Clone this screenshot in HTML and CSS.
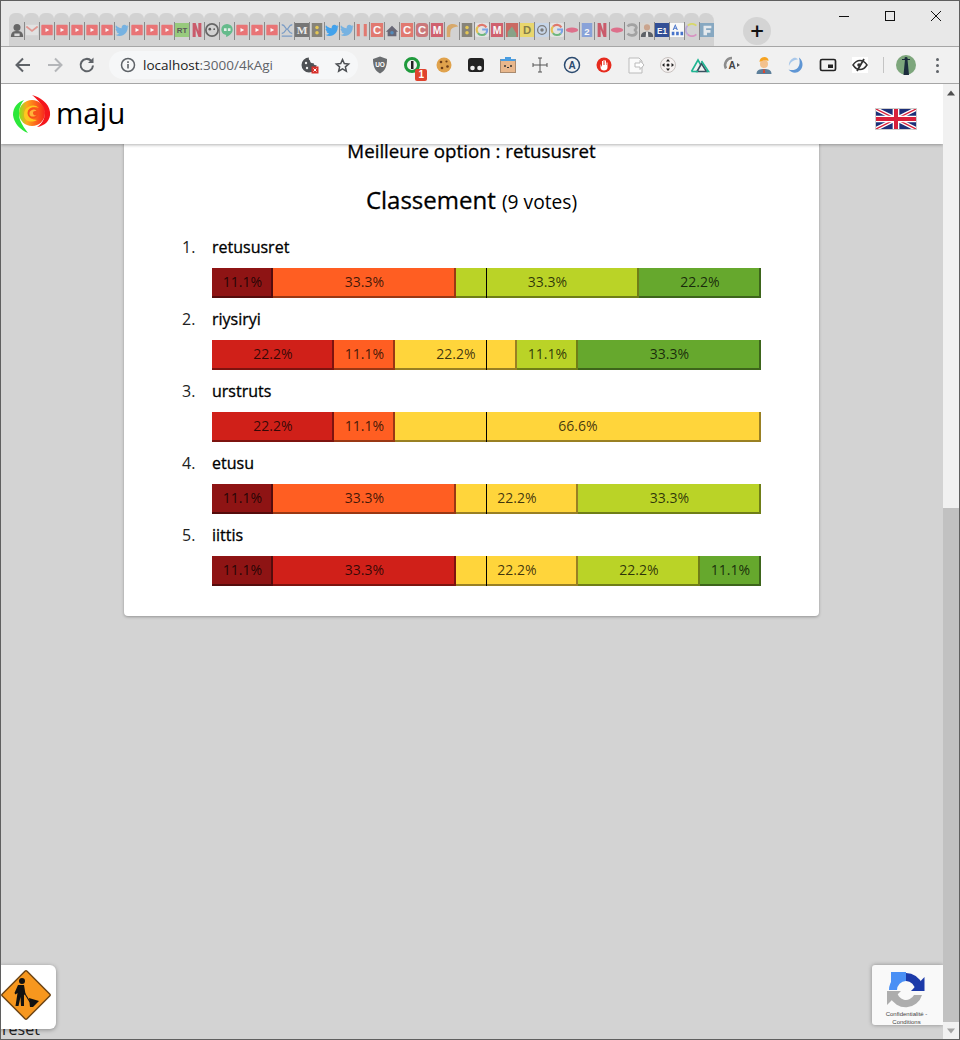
FILE: index.html
```html
<!DOCTYPE html>
<html lang="fr">
<head>
  <meta charset="UTF-8">
  <title>maju</title>
  <link rel="stylesheet" href="styles.css">
</head>
<body>
  <!-- favicons used by the tab strip -->
  <svg class="defs" width="0" height="0">
    <symbol id="yt" viewBox="0 0 16 16"><rect x="1.500" y="2" width="13" height="12" rx="1" fill="#ee6466"/><path d="M6.300 5.800v4.400L10.500 8z" fill="#fff"/></symbol>
    <symbol id="bird" viewBox="0 0 16 16"><path d="M15.500 3.400c-.6.3-1.200.4-1.800.5.600-.4 1.100-1 1.400-1.700-.6.4-1.300.6-2 .8C12.500 2.400 11.700 2 10.800 2 9 2 7.600 3.500 7.600 5.200c0 .3 0 .5.100.7C5 5.800 2.700 4.500 1.100 2.600.8 3.100.7 3.600.7 4.200c0 1.100.6 2.100 1.400 2.700-.5 0-1-.2-1.500-.4 0 1.600 1.100 2.900 2.600 3.200-.5.100-1 .2-1.500.1.400 1.300 1.600 2.200 3 2.200C3.600 13 2 13.600.4 13.400 1.800 14.300 3.500 14.800 5.200 14.800c6 0 9.300-5 9.300-9.300v-.4c.400-.5.700-1 1-1.700z"/></symbol>
    <symbol id="traffic" viewBox="0 0 16 16"><rect x="2" y="0" width="12" height="16" fill="#79766a"/><circle cx="8" cy="5" r="2" fill="#e8c640"/><circle cx="8" cy="11" r="2" fill="#e8c640"/></symbol>
    <symbol id="gee" viewBox="0 0 16 16"><rect x="0" y="0" width="16" height="16" rx="2" fill="#e6e6e6"/><path d="M13 5a6 6 0 0 0-9.500-1" fill="none" stroke="#e2685a" stroke-width="2.400"/><path d="M3.500 4a6 6 0 0 0-.2 7.500" fill="none" stroke="#e8c040" stroke-width="2.400"/><path d="M3.300 11.500a6 6 0 0 0 9 .5" fill="none" stroke="#5db36f" stroke-width="2.400"/><path d="M12.300 12a5 5 0 0 0 1.500-4.500H8.200" fill="none" stroke="#6d9be8" stroke-width="2.400"/></symbol>
    <symbol id="netflix" viewBox="0 0 16 16"><path d="M3 0h3.500l3 9V0H13v16h-3.300L6.500 7v9H3z" fill="#c9475a"/></symbol>
    <symbol id="oval" viewBox="0 0 16 16"><ellipse cx="8" cy="8" rx="7" ry="3" fill="#e0607f"/></symbol>
  </svg>

  <div class="window">
    <div class="tabstrip">
      <div class="tabs">
        <span class="tab"><svg viewBox="0 0 16 16"><circle cx="8" cy="5" r="4" fill="#555"/><path d="M1 16c0-6 3-7 7-7s7 1 7 7z" fill="#555"/><path d="M5 12h6v3H5z" fill="#ddd"/></svg></span>
        <span class="tab"><svg viewBox="0 0 16 16"><rect x="1" y="2" width="14" height="12" fill="#e4e4e4"/><path d="M1.500 4l6.500 5 6.500-5" fill="none" stroke="#e48f88" stroke-width="2"/></svg></span>
        <span class="tab"><svg><use href="#yt"/></svg></span>
        <span class="tab"><svg><use href="#yt"/></svg></span>
        <span class="tab"><svg><use href="#yt"/></svg></span>
        <span class="tab"><svg><use href="#yt"/></svg></span>
        <span class="tab"><svg><use href="#yt"/></svg></span>
        <span class="tab"><svg class="sky"><use href="#bird"/></svg></span>
        <span class="tab"><svg><use href="#yt"/></svg></span>
        <span class="tab"><svg><use href="#yt"/></svg></span>
        <span class="tab"><svg><use href="#yt"/></svg></span>
        <span class="tab"><svg viewBox="0 0 16 16"><rect width="16" height="16" fill="#8fc96f"/><text x="8" y="11.500" class="fav-text" fill="#444" font-size="9">RT</text></svg></span>
        <span class="tab"><svg><use href="#netflix"/></svg></span>
        <span class="tab"><svg viewBox="0 0 16 16"><circle cx="8" cy="8" r="7" fill="none" stroke="#555" stroke-width="2"/><circle cx="5.500" cy="7" r="1.500" fill="#444"/><circle cx="10.500" cy="7" r="1" fill="#444"/></svg></span>
        <span class="tab"><svg viewBox="0 0 16 16"><path d="M8 1a6.500 6.500 0 0 0-6.500 6.500C1.500 11 4 13.500 7 13.500V16c4-1.500 7.500-4.500 7.500-8.500A6.500 6.500 0 0 0 8 1z" fill="#52b77f"/><path d="M4.500 6h3v3h-3zM9 6h3v3H9z" fill="#e6f5ec"/></svg></span>
        <span class="tab"><svg><use href="#yt"/></svg></span>
        <span class="tab"><svg><use href="#yt"/></svg></span>
        <span class="tab"><svg><use href="#yt"/></svg></span>
        <span class="tab"><svg viewBox="0 0 16 16"><path d="M2 2c4 0 4 5 6 5s2-5 6-5M2 12c4 0 4-5 6-5s2 5 6 5M2 15h12" fill="none" stroke="#6d94c4" stroke-width="1.500"/></svg></span>
        <span class="tab"><svg viewBox="0 0 16 16"><rect width="16" height="16" fill="#666"/><text x="8" y="13" class="fav-text serif" fill="#eee" font-size="13">M</text></svg></span>
        <span class="tab"><svg><use href="#traffic"/></svg></span>
        <span class="tab"><svg class="blue"><use href="#bird"/></svg></span>
        <span class="tab"><svg class="sky"><use href="#bird"/></svg></span>
        <span class="tab"><svg viewBox="0 0 16 16"><path d="M2 1h3.500v14H2zM10 1h3.500v14H10z" fill="#e46a60"/></svg></span>
        <span class="tab"><svg viewBox="0 0 16 16"><rect x="1" width="14" height="16" fill="#e46a60"/><text x="8" y="12.500" class="fav-text" fill="#fff" font-size="13">C</text></svg></span>
        <span class="tab"><svg viewBox="0 0 16 16"><path d="M8 3l7 7h-2v5H3v-5H1z" fill="#556"/><circle cx="8" cy="11" r="2" fill="#3d7fb8"/></svg></span>
        <span class="tab"><svg viewBox="0 0 16 16"><rect x="1" width="14" height="16" fill="#e46a60"/><text x="8" y="12.500" class="fav-text" fill="#fff" font-size="13">C</text></svg></span>
        <span class="tab"><svg viewBox="0 0 16 16"><rect x="1" y="0" width="14" height="16" rx="4" fill="#c9696c"/><text x="8" y="12.500" class="fav-text" fill="#fff" font-size="13">C</text></svg></span>
        <span class="tab"><svg viewBox="0 0 16 16"><rect x="1" width="14" height="16" fill="#cf4d5d"/><text x="8" y="12.500" class="fav-text" fill="#fff" font-size="12">M</text></svg></span>
        <span class="tab"><svg viewBox="0 0 16 16"><path d="M2 16V7c0-4 3-6 7-6 3 0 5 1 6 3-3 0-6 1-8 3-1 2-1 5-1 9z" fill="#d9a25a"/></svg></span>
        <span class="tab"><svg><use href="#traffic"/></svg></span>
        <span class="tab"><svg><use href="#gee"/></svg></span>
        <span class="tab"><svg viewBox="0 0 16 16"><rect x="1" width="14" height="16" fill="#cf4d5d"/><text x="8" y="12.500" class="fav-text" fill="#fff" font-size="12">M</text></svg></span>
        <span class="tab"><svg viewBox="0 0 16 16"><rect x="1" width="14" height="16" fill="#c9574f"/><path d="M3 10l5-6 5 8v4H3z" fill="#7b9a7a"/></svg></span>
        <span class="tab"><svg viewBox="0 0 16 16"><rect width="16" height="16" fill="#ecd75c"/><text x="8" y="13" class="fav-text" fill="#776f33" font-size="13">D</text></svg></span>
        <span class="tab"><svg viewBox="0 0 16 16"><rect width="16" height="16" rx="2" fill="#c5d6ec"/><circle cx="8" cy="8" r="5" fill="none" stroke="#6d6d6d" stroke-width="1.500"/><circle cx="8" cy="8" r="2" fill="#6d6d6d"/></svg></span>
        <span class="tab"><svg><use href="#gee"/></svg></span>
        <span class="tab"><svg><use href="#oval"/></svg></span>
        <span class="tab"><svg viewBox="0 0 16 16"><rect x="2" y="0" width="12" height="16" fill="#7d9ada"/><text x="8" y="13.500" class="fav-text" fill="#fff" font-size="11">2</text></svg></span>
        <span class="tab"><svg><use href="#netflix"/></svg></span>
        <span class="tab"><svg><use href="#oval"/></svg></span>
        <span class="tab"><svg viewBox="0 0 16 16"><path d="M3 4c2-3 9-3 10 1 0 2-2 3-3 3 2 0 3 2 3 3-1 4-8 4-10 1" fill="none" stroke="#9a9a9a" stroke-width="3"/></svg></span>
        <span class="tab"><svg viewBox="0 0 16 16"><rect width="16" height="16" fill="#d8d4ce"/><circle cx="8" cy="5" r="3.500" fill="#c99c82"/><path d="M1 16c0-5 3-6 7-6s7 1 7 6z" fill="#4a4f55"/><path d="M7 10h2l.5 6h-3z" fill="#eee"/></svg></span>
        <span class="tab"><svg viewBox="0 0 16 16"><rect width="16" height="16" fill="#17398c"/><text x="8" y="12" class="fav-text" fill="#fff" font-size="9.500">E1</text></svg></span>
        <span class="tab"><svg viewBox="0 0 16 16"><rect width="16" height="16" fill="#fff"/><path d="M6 1L3 8h1.300l.6-1.500h2.200L7.700 8H9zM5.300 5.300L6 3.300l.7 2z" fill="#2f63c9"/><path d="M2 10h3v4H2zM7 10h3v4H7zM12 10h3v4h-3z" fill="#2f63c9"/></svg></span>
        <span class="tab"><svg viewBox="0 0 16 16"><path d="M13 3A7 7 0 0 0 3 3" fill="none" stroke="#d9d95c" stroke-width="2"/><path d="M3 3a7 7 0 0 0 0 10" fill="none" stroke="#b9a4dc" stroke-width="2"/><path d="M3 13a7 7 0 0 0 10 0" fill="none" stroke="#d98ac0" stroke-width="2"/></svg></span>
        <span class="tab"><svg viewBox="0 0 16 16"><rect width="16" height="16" fill="#7aa1bf"/><path d="M4 3h9v3H7v2h5v3H8v3H4z" fill="#e8eef2"/></svg></span>
      </div>
      <button class="newtab">+</button>
      <div class="winctl">
        <span class="winbtn"><svg viewBox="0 0 10 10"><path d="M0 5.500h10" stroke="#111"/></svg></span>
        <span class="winbtn"><svg viewBox="0 0 10 10"><rect x=".5" y=".5" width="9" height="9" fill="none" stroke="#111"/></svg></span>
        <span class="winbtn"><svg viewBox="0 0 10 10"><path d="M0 0l10 10M10 0L0 10" stroke="#111"/></svg></span>
      </div>
    </div>

    <div class="toolbar">
      <span class="tool"><svg viewBox="0 0 20 20"><path d="M17 10H4M10 3.500L3.500 10l6.500 6.500" fill="none" stroke="#5f6368" stroke-width="2"/></svg></span>
      <span class="tool"><svg viewBox="0 0 20 20"><path d="M3 10h13M10 3.500l6.500 6.500-6.500 6.500" fill="none" stroke="#b4b6b9" stroke-width="2"/></svg></span>
      <span class="tool"><svg viewBox="0 0 20 20"><path d="M16 10.500A6.200 6.200 0 1 1 14.200 5.700" fill="none" stroke="#5f6368" stroke-width="2"/><path d="M16.500 2.500v5.500H11z" fill="#5f6368"/></svg></span>
      <div class="omnibox">
        <svg class="info" viewBox="0 0 16 16"><circle cx="8" cy="8" r="6.500" fill="none" stroke="#5f6368" stroke-width="1.500"/><path d="M7.200 7h1.600v4.500H7.200zM7.200 4.300h1.600v1.600H7.200z" fill="#5f6368"/></svg>
        <span class="url">localhost<span class="url-rest">:3000/4kAgi</span></span>
        <span class="omni-icon site"><svg viewBox="0 0 20 20"><path d="M9 2.500a7.500 7.500 0 1 0 7.500 7.500c-2 .5-3-.5-3-2-2 .5-3.500-.5-3.500-2.500C9 5 8.500 4 9 2.500z" fill="#4e5155"/><circle cx="6" cy="8" r="1.200" fill="#eee"/><circle cx="7" cy="13" r="1.200" fill="#eee"/><rect x="11.500" y="11.500" width="7" height="7" fill="#d8302a"/><path d="M13.500 13.500l3 3M16.500 13.500l-3 3" stroke="#fff"/></svg></span>
        <span class="omni-icon"><svg viewBox="0 0 20 20"><path d="M10 3l2.100 4.700 5.100.5-3.800 3.400 1.100 5L10 14l-4.500 2.600 1.100-5-3.800-3.400 5.100-.5z" fill="none" stroke="#4e5155" stroke-width="1.800"/></svg></span>
      </div>
      <div class="extensions">
        <span class="ext"><svg viewBox="0 0 20 20"><path d="M10 1.500l7 2.500c0 7-1.500 11.500-7 14.500C4.500 15.500 3 11 3 4z" fill="#6a6d70"/><text x="10" y="11.500" class="fav-text" fill="#fff" font-size="6.500">UO</text></svg></span>
        <span class="ext">
          <svg viewBox="0 0 20 20"><circle cx="10" cy="10" r="6.500" fill="none" stroke="#1f9a3c" stroke-width="3"/><path d="M9 6h2.500v8H9z" fill="#222"/></svg>
          <span class="badge">1</span>
        </span>
        <span class="ext"><svg viewBox="0 0 20 20"><circle cx="10" cy="10" r="7.500" fill="#e0a24c"/><circle cx="7" cy="7" r="1.300" fill="#6d3d17"/><circle cx="12.500" cy="6.500" r="1.100" fill="#6d3d17"/><circle cx="13.500" cy="11.500" r="1.300" fill="#6d3d17"/><circle cx="8" cy="13" r="1.300" fill="#6d3d17"/></svg></span>
        <span class="ext"><svg viewBox="0 0 20 20"><rect x="2" y="3" width="16" height="14" rx="3" fill="#222"/><circle cx="6.500" cy="13" r="2.300" fill="#eee"/><circle cx="13.500" cy="13" r="2.300" fill="#eee"/></svg></span>
        <span class="ext"><svg viewBox="0 0 20 20"><rect x="2.500" y="4.500" width="15" height="13" fill="#e8b78c" stroke="#a98a6e"/><rect x="7" y="2" width="6" height="3" fill="#4a9de0"/><rect x="2.500" y="4" width="15" height="2" fill="#4a9de0"/><circle cx="7" cy="11" r="1" fill="#333"/><circle cx="13" cy="11" r="1" fill="#333"/><path d="M9 12.500h2" stroke="#333"/></svg></span>
        <span class="ext"><svg viewBox="0 0 20 20"><path d="M10 3v14M3 10h14M8 3h4M8 17h4M3 8v4M17 8v4" fill="none" stroke="#555"/></svg></span>
        <span class="ext"><svg viewBox="0 0 20 20"><circle cx="10" cy="10" r="7.500" fill="none" stroke="#2b4a6f" stroke-width="1.500"/><text x="10" y="13.500" class="fav-text" fill="#2b4a6f" font-size="10">A</text></svg></span>
        <span class="ext"><svg viewBox="0 0 20 20"><circle cx="10" cy="10" r="7.500" fill="#e62b1e"/><path d="M6.500 9v3.500c0 2 1.500 3 3.500 3s3.500-1 3.500-3V7.500h-1V10h-.5V5.500h-1V10h-.5V5h-1v5h-.5V6h-1v6z" fill="#fff"/></svg></span>
        <span class="ext"><svg viewBox="0 0 20 20"><path d="M3 3h10l3 3v12H3z" fill="#fafafa" stroke="#bbb"/><path d="M9 8h5V5.500l4 4.500-4 4.500V12H9z" fill="#fff" stroke="#bbb"/></svg></span>
        <span class="ext"><svg viewBox="0 0 20 20"><circle cx="10" cy="10" r="7.500" fill="#f6f2f1" stroke="#c9c2c0"/><path d="M10 4l2 2.500H8zM10 16l-2-2.500h4zM4 10l2.500-2v4zM16 10l-2.500 2V8z" fill="#222"/><circle cx="10" cy="10" r="1.500" fill="#222"/></svg></span>
        <span class="ext"><svg viewBox="0 0 20 20"><path d="M1.500 16.500L8 5l2.500 4.500" fill="none" stroke="#1fb592" stroke-width="1.600"/><path d="M7 16.500L11.500 8.500l5 8z" fill="none" stroke="#38505f" stroke-width="1.600"/><path d="M1.500 16.500H8" stroke="#1fb592" stroke-width="1.600"/><path d="M11.500 6l7 10.500h-2" fill="none" stroke="#1fb592" stroke-width="1.600"/></svg></span>
        <span class="ext"><svg viewBox="0 0 20 20"><path d="M10 3a7 7 0 0 0-6 10.500" fill="none" stroke="#8d8d8d" stroke-width="2.500"/><text x="10" y="14" class="fav-text" fill="#444" font-size="10">A</text><path d="M15 8l3 2-3 2z" fill="#555"/></svg></span>
        <span class="ext"><svg viewBox="0 0 20 20"><path d="M2.500 19c0-4 3-5 7.500-5s7.500 1 7.500 5z" fill="#5d7f9a"/><circle cx="10" cy="9" r="4" fill="#f2c18d"/><path d="M5.500 7c0-3 2-5 5-5 2 0 4 1 4 4-2-1-6-1-9 1z" fill="#f6a321"/><path d="M9.500 14h1l.7 4h-2.400z" fill="#e2452b"/></svg></span>
        <span class="ext"><svg viewBox="0 0 20 20"><path d="M13 2.500c4 3 5 9 1 13s-9 2-11.500-1c3 1 7 1 9.500-2 2-3 2-6 1-10z" fill="#5f96d4"/><path d="M7.500 3C4 4.500 2.500 8 3 11c1-3 3-5 6-6 2-.5 3-.5 3-.5C11 3 9 2.500 7.500 3z" fill="#a9c8ea"/></svg></span>
        <span class="ext"><svg viewBox="0 0 20 20"><rect x="2.500" y="4.500" width="15" height="11" rx="1.500" fill="none" stroke="#222" stroke-width="1.700"/><rect x="10" y="9.500" width="5" height="3.500" fill="#222"/></svg></span>
        <span class="ext"><svg viewBox="0 0 20 20"><rect x="2" y="2" width="16" height="16" fill="#fff"/><path d="M3 10c2-3 4.500-4.500 7-4.500s5 1.500 7 4.500c-2 3-4.500 4.500-7 4.500S5 13 3 10z" fill="none" stroke="#333" stroke-width="1.500"/><path d="M14 4L7 16" stroke="#333" stroke-width="1.800"/><circle cx="9" cy="10" r="1.800" fill="#333"/></svg></span>
      </div>
      <span class="tool-sep"></span>
      <span class="avatar"><svg viewBox="0 0 20 20"><circle cx="10" cy="10" r="10" fill="#7da67c"/><path d="M10 2c1.500 0 2 1 1.500 2.500L13 20H7.500l1.500-15.500C8 3 8.500 2 10 2z" fill="#1b2c3c"/><path d="M6 4.500h8" stroke="#1b2c3c"/></svg></span>
      <span class="dots"><i></i><i></i><i></i></span>
    </div>

    <div class="page">
      <div class="viewport">
        <header class="site-header">
          <div class="brand">
            <svg class="brand-logo" viewBox="0 0 38 38">
              <defs>
                <linearGradient id="swirl" x1="0" y1="0" x2="1" y2="0">
                  <stop offset="0" stop-color="#7fe81e"/>
                  <stop offset=".3" stop-color="#ffa41c"/>
                  <stop offset="1" stop-color="#f8261c"/>
                </linearGradient>
              </defs>
              <path d="M19 0C27 2 36 8 37 17 38 25 32 31 24 32 30 28 33 22 31 15 29 9 24 4 19 0z" fill="#f4161c"/>
              <path d="M15 38C7 35 1 28 0 20 0 12 5 7 11 5 6 11 5 18 7 25 9 30 12 34 15 38z" fill="#2ce83a"/>
              <circle cx="19" cy="18" r="13" fill="url(#swirl)"/>
              <path d="M11 20a9 9 0 0 1 15-7c-5-2-10-1-11 4-1 5 4 8 9 8-5 3-13 2-13-5z" fill="#ffc81f"/>
              <circle cx="20" cy="18" r="5.500" fill="#f8521a"/>
              <path d="M16.500 19a4 4 0 0 1 7-3c-2 0-3.500 0-3.500 2s2 3 3.500 2c-2 2.500-7 2-7-1z" fill="#ffb43a"/>
            </svg>
            <span class="brand-name">maju</span>
          </div>
          <svg class="flag" viewBox="0 0 60 30" preserveAspectRatio="none">
            <rect width="60" height="30" fill="#1c2f78"/>
            <path d="M0 0l60 30M60 0L0 30" stroke="#fff" stroke-width="6"/>
            <path d="M0 0l60 30M60 0L0 30" stroke="#d8203a" stroke-width="2"/>
            <path d="M30 0v30M0 15h60" stroke="#fff" stroke-width="10"/>
            <path d="M30 0v30M0 15h60" stroke="#d8203a" stroke-width="6"/>
          </svg>
        </header>

        <section class="results">
          <h2 class="best">Meilleure option : retususret</h2>
          <h1 class="ranking-title">Classement <small>(9 votes)</small></h1>

          <div class="rank">
            <span class="rank-num">1.</span>
            <span class="rank-name">retususret</span>
            <div class="bar">
              <span class="seg worst" style="width:11.11%">11.1%</span>
              <span class="seg poor" style="width:33.33%">33.3%</span>
              <span class="seg good" style="width:33.33%">33.3%</span>
              <span class="seg best-seg" style="width:22.23%">22.2%</span>
            </div>
          </div>
          <div class="rank">
            <span class="rank-num">2.</span>
            <span class="rank-name">riysiryi</span>
            <div class="bar">
              <span class="seg bad" style="width:22.22%">22.2%</span>
              <span class="seg poor" style="width:11.11%">11.1%</span>
              <span class="seg fair" style="width:22.22%">22.2%</span>
              <span class="seg good" style="width:11.11%">11.1%</span>
              <span class="seg best-seg" style="width:33.34%">33.3%</span>
            </div>
          </div>
          <div class="rank">
            <span class="rank-num">3.</span>
            <span class="rank-name">urstruts</span>
            <div class="bar">
              <span class="seg bad" style="width:22.22%">22.2%</span>
              <span class="seg poor" style="width:11.11%">11.1%</span>
              <span class="seg fair" style="width:66.67%">66.6%</span>
            </div>
          </div>
          <div class="rank">
            <span class="rank-num">4.</span>
            <span class="rank-name">etusu</span>
            <div class="bar">
              <span class="seg worst" style="width:11.11%">11.1%</span>
              <span class="seg poor" style="width:33.33%">33.3%</span>
              <span class="seg fair" style="width:22.22%">22.2%</span>
              <span class="seg good" style="width:33.34%">33.3%</span>
            </div>
          </div>
          <div class="rank">
            <span class="rank-num">5.</span>
            <span class="rank-name">iittis</span>
            <div class="bar">
              <span class="seg worst" style="width:11.11%">11.1%</span>
              <span class="seg bad" style="width:33.33%">33.3%</span>
              <span class="seg fair" style="width:22.22%">22.2%</span>
              <span class="seg good" style="width:22.22%">22.2%</span>
              <span class="seg best-seg" style="width:11.12%">11.1%</span>
            </div>
          </div>
        </section>

        <div class="reset">reset</div>

        <!-- floating widgets -->
        <div class="wip-badge">
          <svg viewBox="0 0 52 52">
            <rect x="8.500" y="8.500" width="35" height="35" rx="1.500" transform="rotate(45 26 26)" fill="#f7971e" stroke="#6b4314" stroke-width="1.400"/>
            <circle cx="22" cy="12" r="3" fill="#111"/>
            <path d="M18 16h6l1.500 9-1.500 1v11h-3l-.5-9-2 9h-3l2-13-2 1.500-1-1.500z" fill="#111"/>
            <path d="M22 20l8 13" stroke="#111" stroke-width="1.100"/>
            <path d="M29 29l10 3-6 6h-3z" fill="#111"/>
          </svg>
        </div>
        <div class="captcha">
          <svg class="captcha-logo" viewBox="0 0 40 40">
            <path d="M3 20A17 17 0 0 1 20 3V11A9 9 0 0 0 11 20z" fill="#4a90f5"/>
            <path d="M5 2H20V5L5 17z" fill="#4a90f5"/>
            <path d="M20 3A17 17 0 0 1 36 14L29 20A9 9 0 0 0 20 11z" fill="#1c3aa9"/>
            <path d="M38.500 7V21H25z" fill="#1c3aa9"/>
            <path d="M36 25A17 17 0 0 1 4 27L11 21A9 9 0 0 0 28 25z" fill="#adadad"/>
            <path d="M1 21H15L1 35z" fill="#adadad"/>
          </svg>
          <div class="captcha-text">Confidentialité -<br>Conditions</div>
        </div>
      </div>
      <div class="scrollbar">
        <svg class="scroll-arrow" viewBox="0 0 16 16"><path d="M4 11l4-5 4 5z" fill="#505050"/></svg>
        <div class="scroll-track"><div class="scroll-thumb"></div></div>
        <svg class="scroll-arrow" viewBox="0 0 16 16"><path d="M4 6l4 5 4-5z" fill="#a3a3a3"/></svg>
      </div>
    </div>
  </div>
</body>
</html>
```

FILE: styles.css
```css
* {
  box-sizing: border-box;
}
html, body {
  margin: 0;
  height: 100%;
  overflow: hidden;
}
body {
  font-family: 'Open Sans', 'Noto Sans', sans-serif;
  color: #000;
}
.defs {
  position: absolute;
}
.fav-text {
  font-family: 'Liberation Sans', sans-serif;
  font-weight: 700;
  text-anchor: middle;
}
.fav-text.serif {
  font-family: 'Liberation Serif', serif;
}
.window {
  height: 1040px;
  width: 960px;
  border: 1px solid #5f5f5f;
  display: flex;
  flex-direction: column;
}

/* tab strip */
.tabstrip {
  height: 46px;
  background: #e8e8e8;
  border-bottom: 1px solid #a6a6a6;
  display: flex;
  padding-left: 8px;
}
.tabs {
  display: flex;
  padding-top: 12px;
}
.tab {
  width: 15px;
  height: 33px;
  background: #d2d2d2;
  border-radius: 6px 6px 0 0;
  display: flex;
  align-items: center;
  justify-content: center;
  position: relative;
}
.tab:last-child {
  border-radius: 6px 8px 0 0;
}
.tab svg {
  width: 14px;
  height: 14px;
  opacity: .85;
}
.tab + .tab {
  background: linear-gradient(#8a8a8a, #8a8a8a) no-repeat left 0 top 9px / 1px 18px, #d2d2d2;
}
.tab svg.sky {
  fill: #68ade4;
}
.tab svg.blue {
  fill: #2b9af0;
}
.newtab {
  width: 28px;
  height: 28px;
  margin: 16px 0 0 29px;
  border: none;
  border-radius: 50%;
  background: #d4d4d4;
  color: #111;
  font: 600 24px/26px 'Open Sans', sans-serif;
  padding: 0;
}
.winctl {
  margin-left: auto;
  display: flex;
}
.winbtn {
  width: 46px;
  height: 30px;
  display: flex;
  align-items: center;
  justify-content: center;
}
.winbtn svg {
  width: 10px;
  height: 10px;
}

/* browser toolbar */
.toolbar {
  height: 37px;
  background: #f1f1f1;
  border-bottom: 1px solid #a6a6a6;
  display: flex;
  align-items: center;
  padding-left: 6px;
  flex: none;
}
.tool, .ext, .omni-icon {
  width: 32px;
  height: 28px;
  display: flex;
  align-items: center;
  justify-content: center;
  position: relative;
  flex: none;
}
.tool svg, .ext svg {
  width: 20px;
  height: 20px;
}
.omni-icon svg {
  width: 17px;
  height: 17px;
}
.omni-icon.site svg {
  width: 20px;
  height: 20px;
}
.omnibox {
  width: 249px;
  height: 28px;
  margin: 0 5px 0 6px;
  background: #f6f7f8;
  border-radius: 14px;
  display: flex;
  align-items: center;
  padding-left: 11px;
  font-size: 13px;
}
.info {
  width: 16px;
  height: 16px;
  margin-right: 7px;
  flex: none;
}
.url {
  flex: 1;
  white-space: nowrap;
  font-size: 13.500px;
  color: #222;
}
.url-rest {
  color: #5f6368;
}
.extensions {
  display: flex;
  margin-left: 1px;
}
.badge {
  position: absolute;
  right: 1px;
  bottom: -2px;
  background: #e0432e;
  color: #fff;
  font: 700 10px/12px 'Liberation Sans', sans-serif;
  padding: 0 3px;
  border-radius: 2px;
}
.tool-sep {
  width: 1px;
  height: 16px;
  background: #c4c4c4;
  margin: 0 12px 0 7px;
  flex: none;
}
.avatar svg {
  width: 20px;
  height: 20px;
  display: block;
}
.dots {
  margin-left: 20px;
  display: flex;
  flex-direction: column;
  gap: 3px;
}
.dots i {
  width: 3px;
  height: 3px;
  border-radius: 50%;
  background: #5f6368;
  display: block;
}

/* page area */
.page {
  flex: 1;
  display: flex;
  min-height: 0;
}
.viewport {
  flex: 1;
  background: #d3d3d3;
  position: relative;
  overflow: hidden;
  display: flex;
  flex-direction: column;
}
.site-header {
  height: 60px;
  background: #fff;
  box-shadow: 0 1px 3px rgba(0,0,0,0.3);
  display: flex;
  align-items: center;
  justify-content: space-between;
  padding: 0 26px 0 12px;
  position: relative;
  z-index: 2;
  flex: none;
}
.brand {
  display: flex;
  align-items: center;
  gap: 5px;
}
.brand-logo {
  width: 38px;
  height: 38px;
}
.brand-name {
  font-size: 29.500px;
  line-height: 36px;
  margin-bottom: 3px;
}
.flag {
  width: 42px;
  height: 22px;
  border: 1px solid #ccc;
  margin-top: 10px;
}

/* results card */
.results {
  width: 695px;
  margin: -20px 0 0 123px;
  padding: 15px 58px 20px;
  background: #fff;
  border-radius: 4px;
  box-shadow: 0 1px 3px rgba(0,0,0,0.3);
  flex: none;
}
.best {
  margin: 0 0 21px;
  font-size: 18.720px;
  line-height: 24px;
  font-weight: 400;
  text-align: center;
  -webkit-text-stroke: .3px #000;
}
.ranking-title {
  margin: 0 0 18px;
  font-size: 24px;
  line-height: 32px;
  font-weight: 400;
  text-align: center;
  -webkit-text-stroke: .3px #000;
}
.ranking-title small {
  font-size: 19.200px;
  -webkit-text-stroke: 0;
}
.rank {
  display: grid;
  grid-template-columns: 30px 549px;
}
.rank-num {
  font-size: 16px;
  line-height: 22px;
  color: #222;
}
.rank-name {
  font-size: 16px;
  line-height: 22px;
  -webkit-text-stroke: .3px #000;
}
.bar {
  grid-column: 2;
  margin: 10px 0;
  height: 30px;
  display: flex;
  position: relative;
}
/* median marker */
.bar::after {
  content: "";
  position: absolute;
  left: 274px;
  top: 0;
  bottom: 0;
  width: 1px;
  background: #000;
}
.seg {
  height: 30px;
  border-right: 2px solid rgba(0,0,0,0.4);
  border-bottom: 2px solid rgba(0,0,0,0.4);
  padding-left: 2px;
  font-size: 14px;
  line-height: 28px;
  text-align: center;
  color: rgba(0,0,0,0.75);
}
.worst { background: #8e1414; }
.bad { background: #d02019; }
.poor { background: #ff5e22; }
.fair { background: #ffd53b; }
.good { background: #bad327; }
.best-seg { background: #66a82d; }

.reset {
  margin-top: auto;
  font-size: 16px;
  line-height: 20px;
  color: #222;
  padding-left: 1px;
}

/* floating widgets */
.wip-badge {
  position: absolute;
  left: -1px;
  bottom: 10px;
  width: 56px;
  height: 64px;
  background: #fff;
  border-radius: 0 6px 6px 0;
  box-shadow: 0 1px 4px rgba(0,0,0,0.35);
  display: flex;
  align-items: center;
}
.wip-badge svg {
  width: 52px;
  height: 52px;
  margin-bottom: 4px;
}
.captcha {
  position: absolute;
  right: 0;
  bottom: 14px;
  width: 71px;
  height: 60px;
  background: #f9f9f9;
  border-radius: 3px 0 0 3px;
  box-shadow: 0 0 4px rgba(0,0,0,0.35);
  display: flex;
  flex-direction: column;
  align-items: center;
}
.captcha-logo {
  width: 40px;
  height: 40px;
  margin: 5px 3px 0 0;
  flex: none;
}
.captcha-text {
  font-family: 'Liberation Sans', sans-serif;
  font-size: 6px;
  line-height: 8px;
  text-align: center;
  color: #444;
  margin-right: 2px;
}

/* scrollbar */
.scrollbar {
  width: 16px;
  background: #f1f1f1;
  display: flex;
  flex-direction: column;
  flex: none;
}
.scroll-arrow {
  width: 16px;
  height: 17px;
  flex: none;
}
.scroll-track {
  flex: 1;
  display: flex;
  flex-direction: column;
  justify-content: flex-end;
}
.scroll-thumb {
  height: 514px;
  background: #c1c1c1;
}
```
